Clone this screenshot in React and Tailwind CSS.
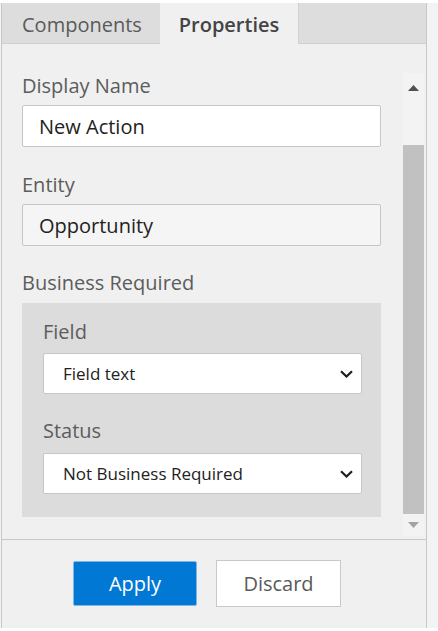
import React from 'react';

const font = { fontFamily: '"Open Sans", "Noto Sans", sans-serif' };

function Chevron() {
    return (
        <svg width="13" height="8" viewBox="0 0 13 8" className="shrink-0">
            <path d="M1 1.2 L6.5 6.5 L12 1.2" fill="none" stroke="#1e1e1e" strokeWidth="2.2" />
        </svg>
    );
}

function Label({ children, className = "" }) {
    return <div className={`text-[20px] leading-[28px] text-[#5c5c5c] ${className}`}>{children}</div>;
}

function SelectBox({ value }) {
    return (
        <div className="h-[41px] w-[319px] bg-white border border-[#c6c6c6] rounded-[2px] flex items-center justify-between pl-[19px] pr-[8px] pt-[1px]">
            <span className="text-[17px] text-[#222]">{value}</span>
            <Chevron />
        </div>
    );
}

export default function App() {
    return (
        <div className="w-[438px] h-[631px] bg-white pt-[3px]" style={font}>
            <div className="flex h-[625px] bg-[#f3f3f3]">
                <div className="ml-[1px] w-[426px] h-full flex flex-col bg-[#f0f0f0] border-l border-r border-[#c8c8c8]">
                    {/* tabs */}
                    <div className="h-[41px] flex shrink-0">
                        <div className="w-[158px] bg-[#dddddd] border-b border-[#d0d0d0] flex items-center pl-[20px] pt-[3px] text-[20px] text-[#5a5a5a]">
                            Components
                        </div>
                        <div className="w-[138px] bg-[#f0f0f0] flex items-center justify-center pt-[3px] text-[20px] font-semibold text-[#444]">
                            Properties
                        </div>
                        <div className="flex-1 bg-[#dddddd] border-b border-l border-[#d0d0d0]" />
                    </div>

                    {/* content */}
                    <div className="h-[495px] flex shrink-0">
                        <div className="pl-[20px] pt-[28px] w-[379px]">
                            <Label className="mb-[5px]">Display Name</Label>
                            <div className="h-[42px] bg-white border border-[#c6c6c6] rounded-[2px] flex items-center pl-[16px] pt-[1px] text-[20px] text-[#222]">
                                New Action
                            </div>

                            <Label className="mt-[24px] mb-[5px]">Entity</Label>
                            <div className="h-[42px] bg-[#f5f5f5] border border-[#c6c6c6] rounded-[2px] flex items-center pl-[16px] pt-[1px] text-[20px] text-[#222]">
                                Opportunity
                            </div>

                            <Label className="mt-[23px] mb-[6px]">Business Required</Label>
                            <div className="bg-[#dcdcdc] pl-[21px] pt-[15px] pb-[23px]">
                                <Label className="mb-[7px]">Field</Label>
                                <SelectBox value="Field text" />
                                <Label className="mt-[23px] mb-[8px]">Status</Label>
                                <SelectBox value="Not Business Required" />
                            </div>
                        </div>

                        {/* scrollbar */}
                        <div className="ml-[22px] mt-[29px] w-[21px] h-[463px] bg-[#f3f3f3] flex flex-col">
                            <div className="h-[30px] flex items-center justify-center">
                                <svg width="11" height="6" viewBox="0 0 11 6"><path d="M0 6 L5.5 0 L11 6 Z" fill="#505050" /></svg>
                            </div>
                            <div className="h-[42px]" />
                            <div className="h-[369px] bg-[#c1c1c1]" />
                            <div className="h-[22px] flex items-center justify-center">
                                <svg width="11" height="6" viewBox="0 0 11 6"><path d="M0 0 L11 0 L5.5 6 Z" fill="#a3a3a3" /></svg>
                            </div>
                        </div>
                    </div>

                    {/* footer */}
                    <div className="flex-1 border-t border-[#c8c8c8] flex items-start pt-[20px] pl-[71px] gap-[19px]">
                        <button className="mt-[1px] w-[124px] h-[45px] bg-[#0078d4] border border-[#7fb6e6] rounded-[2px] text-white text-[20px]">
                            Apply
                        </button>
                        <button className="w-[125px] h-[47px] bg-white border border-[#c8c8c8] text-[#5a5a5a] text-[20px]">
                            Discard
                        </button>
                    </div>
                </div>
            </div>
        </div>
    );
}
